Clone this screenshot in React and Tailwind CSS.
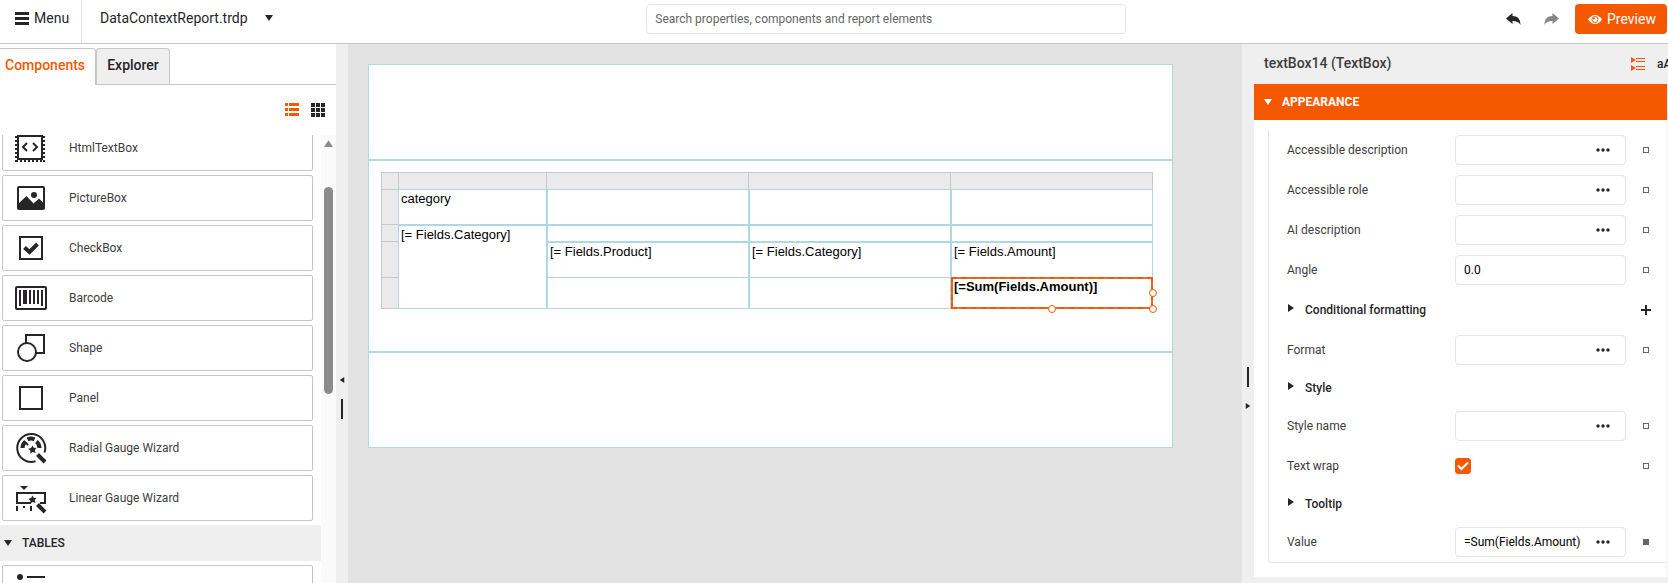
import React, { useState } from 'react';
import clsx from 'clsx';

const DARK = '#272528';
const ORANGE = '#f55900';

const Caret = ({ dir = 'down', className }) => (
  <svg viewBox="0 0 8 8" className={clsx('shrink-0', className)} fill="currentColor" aria-hidden="true">
    {dir === 'down' && <path d="M0 1h8L4 7z" />}
    {dir === 'up' && <path d="M0 7h8L4 1z" />}
    {dir === 'right' && <path d="M1 0v8l6-4z" />}
    {dir === 'left' && <path d="M7 0v8L1 4z" />}
  </svg>
);

const Wand = () => (
  <>
    <path d="M17.5 13.5l1.2 2.3 2.8.1-1.7 2.2.8 2.8-2.8-.8-2.5 1.4.1-2.8-2.1-1.9 2.7-.8z" fill={DARK} />
    <path d="M22.5 22.5l7.5 7.5" stroke={DARK} strokeWidth="4" />
  </>
);

const icons = {
  html: (
    <>
      <path d="M1 0v30M29 0v30M1 29h29" stroke={DARK} strokeWidth="2" strokeDasharray="2 2" />
      <path d="M3 4h24v23H3z" fill="#fff" stroke={DARK} strokeWidth="2" />
      <path d="M12 11l-4 4 4 4M18 11l4 4-4 4" stroke={DARK} strokeWidth="2" />
    </>
  ),
  picture: (
    <>
      <rect x="3" y="5" width="26" height="22" rx="1" stroke={DARK} strokeWidth="2" />
      <circle cx="19" cy="13" r="3" fill={DARK} />
      <path d="M3 27v-5l8.500-8 7 7.500 5.500-5 5 5V27z" fill={DARK} />
    </>
  ),
  check: (
    <>
      <path d="M5 5h22v22H5z" stroke={DARK} strokeWidth="2" />
      <path d="M9.500 15.500l5 4.500 8-8" stroke={DARK} strokeWidth="4" />
    </>
  ),
  barcode: (
    <>
      <rect x="1" y="5" width="30" height="22" rx="1" stroke={DARK} strokeWidth="2" />
      <path
        d="M4 8h2v16H4zM8 8h4v14H8zM14 8h2v14h-2zM18 8h2v14h-2zM22 8h2v14h-2zM26 8h2v16h-2z"
        fill={DARK}
      />
    </>
  ),
  shape: (
    <>
      <path d="M11 3h18v18H11z" stroke={DARK} strokeWidth="2" />
      <circle cx="12" cy="20" r="9" fill="#fff" stroke={DARK} strokeWidth="2" />
    </>
  ),
  panel: <path d="M5 5h22v22H5z" stroke={DARK} strokeWidth="2" />,
  radial: (
    <>
      <path d="M20.500 29.300A14 14 0 1 1 29.500 20.500" stroke={DARK} strokeWidth="2" />
      <path d="M12.500 7.300A9.500 9.500 0 0 1 19.500 7.300" stroke={DARK} strokeWidth="4" />
      <path d="M7.500 16A9 9 0 0 1 10.500 9.500" stroke={DARK} strokeWidth="4" />
      <path d="M21.500 9.500A9 9 0 0 1 24.500 16" stroke={DARK} strokeWidth="4" />
      <path d="M10 10l3 3" stroke={DARK} strokeWidth="2" />
      <Wand />
    </>
  ),
  linear: (
    <>
      <path d="M5 4h8L9 8z" fill={DARK} />
      <path d="M16 21H2V11h28v10h-5" stroke={DARK} strokeWidth="2" />
      <path d="M2 24v5M16 24v5M9 24v2" stroke={DARK} strokeWidth="2" />
      <Wand />
    </>
  ),
  list: (
    <>
      <circle cx="5" cy="5" r="3" fill={DARK} />
      <path d="M12 5h18" stroke={DARK} strokeWidth="2" />
    </>
  ),
};

const components = [
  { icon: 'html', label: 'HtmlTextBox' },
  { icon: 'picture', label: 'PictureBox' },
  { icon: 'check', label: 'CheckBox' },
  { icon: 'barcode', label: 'Barcode' },
  { icon: 'shape', label: 'Shape' },
  { icon: 'panel', label: 'Panel' },
  { icon: 'radial', label: 'Radial Gauge Wizard' },
  { icon: 'linear', label: 'Linear Gauge Wizard' },
];

const properties = [
  { type: 'editor', label: 'Accessible description', value: '', more: true },
  { type: 'editor', label: 'Accessible role', value: '', more: true },
  { type: 'editor', label: 'AI description', value: '', more: true },
  { type: 'editor', label: 'Angle', value: '0.0' },
  { type: 'group', label: 'Conditional formatting', add: true },
  { type: 'editor', label: 'Format', value: '', more: true },
  { type: 'group', label: 'Style' },
  { type: 'editor', label: 'Style name', value: '', more: true },
  { type: 'check', label: 'Text wrap' },
  { type: 'group', label: 'Tooltip' },
  { type: 'editor', label: 'Value', value: '=Sum(Fields.Amount)', more: true, changed: true },
];

const Header = () => (
  <header className="flex h-11 shrink-0 items-start border-b border-[#c6c8c7] bg-white">
    <button className="flex h-full w-[82px] shrink-0 items-start gap-[5px] border-r border-[#e4e4e4] pl-[15px] pt-2 text-sm">
      <svg viewBox="0 0 14 13" className="mt-1 h-[13px] w-[14px]" fill={DARK} aria-hidden="true">
        <path d="M0 0h14v3H0zM0 5h14v3H0zM0 10h14v3H0z" />
      </svg>
      Menu
    </button>
    <button className="flex items-center gap-[17px] pl-[18px] pt-2 text-sm">
      DataContextReport.trdp
      <Caret className="size-2" />
    </button>
    <div className="flex flex-1 justify-center pr-[6px] pt-1">
      <input
        type="text"
        aria-label="Search"
        placeholder="Search properties, components and report elements"
        className="h-[30px] w-[480px] rounded border border-[#e6e6e6] px-2 text-xs placeholder:text-[#666]"
      />
    </div>
    <div className="flex items-center pr-px pt-1">
      <button aria-label="Undo" className="mr-[23px]">
        <svg viewBox="0 0 15 12" className="h-3 w-[15px]" fill={DARK} aria-hidden="true">
          <path d="M0 5.500L6.500 0v3c5 0 8 3 8 9-1.500-3-4-4-8-4v3z" />
        </svg>
      </button>
      <button aria-label="Redo" className="mr-4">
        <svg viewBox="0 0 15 12" className="h-3 w-[15px]" fill="#858585" aria-hidden="true">
          <path d="M15 5.500L8.500 0v3c-5 0-8 3-8 9 1.500-3 4-4 8-4v3z" />
        </svg>
      </button>
      <button className="flex h-[30px] w-[92px] items-center gap-[5px] rounded bg-[#f55900] pl-[13px] text-sm text-white">
        <svg viewBox="0 0 14 9" className="h-[9px] w-[14px]" aria-hidden="true">
          <path d="M0 4.500C2 1.500 4.500 0 7 0s5 1.500 7 4.500C12 7.500 9.500 9 7 9S2 7.500 0 4.500z" fill="#fff" />
          <circle cx="7" cy="4.500" r="3" fill="none" stroke={ORANGE} strokeWidth="1" />
          <circle cx="6" cy="3.500" r="1" fill={ORANGE} />
        </svg>
        Preview
      </button>
    </div>
  </header>
);

const ComponentItem = ({ icon, label }) => (
  <li>
    <button className="flex h-[46px] w-full items-center gap-[22px] rounded-xs border border-[#c6c6c6] bg-white pl-3 text-left text-xs text-[#3d3d3d]">
      <svg viewBox="0 0 32 32" className="size-8 shrink-0" fill="none" aria-hidden="true">
        {icons[icon]}
      </svg>
      {label}
    </button>
  </li>
);

const ComponentsPanel = () => (
  <aside className="flex w-[336px] shrink-0 flex-col bg-white pt-1">
    <div className="flex border-b border-[#c6c6c6] text-sm font-medium">
      <button className="-mb-px h-[37px] w-24 rounded-tr border-r border-t border-[#c6c6c6] bg-white pb-1 pl-[5px] text-left text-[#f55900]">
        Components
      </button>
      <button className="h-9 w-[74px] rounded-t border border-b-0 border-[#c6c6c6] bg-[#efefef] pb-[3px]">
        Explorer
      </button>
    </div>
    <div className="flex h-[50px] shrink-0 items-start justify-end gap-3 pr-[11px] pt-[18px]">
      <button aria-label="List view">
        <svg viewBox="0 0 14 13" className="h-[13px] w-[14px]" fill={ORANGE} aria-hidden="true">
          <path d="M0 0h3v3H0zM4 0h10v3H4zM0 5h3v3H0zM4 5h10v3H4zM0 10h3v3H0zM4 10h10v3H4z" />
        </svg>
      </button>
      <button aria-label="Grid view">
        <svg viewBox="0 0 14 14" className="size-[14px]" fill={DARK} aria-hidden="true">
          <path d="M0 0h4v4H0zM5 0h4v4H5zM10 0h4v4h-4zM0 5h4v4H0zM5 5h4v4H5zM10 5h4v4h-4zM0 10h4v4H0zM5 10h4v4H5zM10 10h4v4h-4z" />
        </svg>
      </button>
    </div>
    <div className="flex min-h-0 flex-1">
      <div className="flex min-w-0 flex-1 flex-col justify-start overflow-hidden">
        {/* the list is scrolled, so the first item is partly out of view */}
        <div className="-mt-[10px]">
          <ul className="flex flex-col gap-1 pl-[2px] pr-2">
            {components.map((item) => (
              <ComponentItem key={item.label} {...item} />
            ))}
          </ul>
          <button className="my-1 flex h-9 w-full items-center gap-[10px] bg-[#efefef] pl-1 text-xs font-medium">
            <Caret className="size-2" />
            TABLES
          </button>
          <ul className="pl-[2px] pr-2">
            <ComponentItem icon="list" label="" />
          </ul>
        </div>
      </div>
      <div className="flex w-[15px] shrink-0 flex-col items-center bg-[#fafafa] pt-1 text-[#8b8b8b]">
        <Caret dir="up" className="size-[9px]" />
        <div className="mt-[39px] h-[207px] w-[9px] rounded-full bg-[#8b8b8b]" />
      </div>
    </div>
  </aside>
);

const Splitter = ({ side }) => (
  <div
    className={clsx(
      'flex w-3 shrink-0 items-center justify-center gap-4 bg-[#efefef]',
      side === 'left' ? 'flex-col pt-[168px]' : 'flex-col-reverse pt-[148px]'
    )}
  >
    <Caret dir={side} className="size-[6px]" />
    <div className="h-5 w-[2px] bg-[#272528]" />
  </div>
);

const cell = 'border border-[#add8e6] px-[2px] pt-px text-left align-top';
const gutter = 'border border-t-0 border-r-0 border-[#c8c8c8] bg-[#eaeaea]';
const handle = 'absolute size-2 rounded-full border border-[#f55900] bg-white';

const ReportTable = () => (
  <table className="w-[772px] table-fixed border-separate border-spacing-0 text-[13px] leading-4 text-black">
    <colgroup>
      <col className="w-[17px]" />
      <col className="w-[149px]" />
      <col className="w-[202px]" />
      <col className="w-[202px]" />
      <col className="w-[202px]" />
    </colgroup>
    <tbody>
      <tr className="h-[17px] bg-[#eaeaea]">
        <td className="border-l border-t border-[#c8c8c8]"></td>
        <td className="border-x border-t border-[#c8c8c8]"></td>
        <td className="border-r border-t border-[#c8c8c8]"></td>
        <td className="border-r border-t border-[#c8c8c8]"></td>
        <td className="border-r border-t border-[#c8c8c8]"></td>
      </tr>
      <tr className="h-9">
        <td className="border border-r-0 border-[#c8c8c8] bg-[#eaeaea]"></td>
        <td className={cell}>category</td>
        <td className={cell}></td>
        <td className={cell}></td>
        <td className={cell}></td>
      </tr>
      <tr className="h-[17px]">
        <td className={gutter}></td>
        <td rowSpan={3} className={cell}>[= Fields.Category]</td>
        <td className={cell}></td>
        <td className={cell}></td>
        <td className={cell}></td>
      </tr>
      <tr className="h-9">
        <td className={gutter}></td>
        <td className={cell}>[= Fields.Product]</td>
        <td className={cell}>[= Fields.Category]</td>
        <td className={cell}>[= Fields.Amount]</td>
      </tr>
      <tr className="h-[31px]">
        <td className={gutter}></td>
        <td className={clsx(cell, 'border-t-0')}></td>
        <td className={clsx(cell, 'border-t-0')}></td>
        <td className={clsx(cell, 'relative border-t-0')}>
          <b>[=Sum(Fields.Amount)]</b>
          <div className="absolute -left-px -right-px -top-px -bottom-px border-2 border-[#e0703a]">
            <div className="absolute -inset-[2px] border-2 border-dashed border-[#f55900]" />
            <span className={clsx(handle, '-right-[6px] top-[10px]')} />
            <span className={clsx(handle, '-bottom-[6px] -right-[6px]')} />
            <span className={clsx(handle, '-bottom-[6px] left-[95px]')} />
          </div>
        </td>
      </tr>
    </tbody>
  </table>
);

const Canvas = () => (
  <main className="min-w-0 flex-1 overflow-hidden bg-[#e3e3e3] pl-5 pt-5 font-['Liberation_Sans',Arial,sans-serif]">
    <div className="w-[805px] border border-[#add8e6] bg-white">
      <section className="h-[94px]" />
      <section className="h-[194px] border-y-2 border-[#add8e6] pl-3 pt-[11px]">
        <ReportTable />
      </section>
      <section className="h-[94px]" />
    </div>
  </main>
);

const Marker = ({ filled }) => (
  <button aria-label="Reset value" className="flex w-10 shrink-0 items-center justify-center">
    <span className={clsx('size-[6px] border border-[#666]', filled && 'bg-[#666]')} />
  </button>
);

const PropertyRow = ({ prop }) => {
  const [value, setValue] = useState(prop.value);
  const [checked, setChecked] = useState(true);
  const id = prop.label.toLowerCase().replace(/ /g, '-');

  if (prop.type === 'group') {
    return (
      <div className={clsx('flex items-center pl-[18px] pr-[15px]', prop.add ? 'h-10' : 'h-9')}>
        <button className="flex flex-1 items-center gap-[10px] text-xs font-medium">
          <Caret dir="right" className="mb-1 size-2" />
          {prop.label}
        </button>
        {prop.add && (
          <button aria-label="Add rule">
            <svg viewBox="0 0 10 10" className="size-[10px]" aria-hidden="true">
              <path d="M5 0v10M0 5h10" stroke={DARK} strokeWidth="2" />
            </svg>
          </button>
        )}
      </div>
    );
  }

  return (
    <div className="flex h-10 items-center pl-[18px]">
      <label htmlFor={id} className="flex-1 text-xs text-[#3d3d3d]">
        {prop.label}
      </label>
      {prop.type === 'check' ? (
        <div className="relative flex w-[171px]">
          <input
            id={id}
            type="checkbox"
            checked={checked}
            onChange={(e) => setChecked(e.target.checked)}
            className="size-4 appearance-none rounded-[3px] border border-[#c6c6c6] checked:border-[#f55900] checked:bg-[#f55900]"
          />
          {checked && (
            <svg viewBox="0 0 16 16" className="pointer-events-none absolute left-0 top-0 size-4" fill="none" aria-hidden="true">
              <path d="M3 7.500l3.500 3.500L13 4.500" stroke="#fff" strokeWidth="2" />
            </svg>
          )}
        </div>
      ) : (
        <div className="flex h-[30px] w-[171px] items-center rounded border border-[#e6e6e6] pr-[15px]">
          <input
            id={id}
            type="text"
            value={value}
            onChange={(e) => setValue(e.target.value)}
            className="min-w-0 flex-1 pl-2 text-xs text-black outline-none"
          />
          {prop.more && (
            <button aria-label={`Edit ${prop.label}`}>
              <svg viewBox="0 0 14 4" className="h-1 w-[14px]" fill={DARK} aria-hidden="true">
                <circle cx="2" cy="2" r="1.700" />
                <circle cx="7" cy="2" r="1.700" />
                <circle cx="12" cy="2" r="1.700" />
              </svg>
            </button>
          )}
        </div>
      )}
      <Marker filled={prop.changed} />
    </div>
  );
};

const PropertiesPanel = () => (
  <aside className="w-[414px] shrink-0 overflow-hidden bg-[#efefef]">
    <div className="flex h-10 items-center pl-[10px]">
      <h2 className="flex-1 pb-[2px] text-sm font-medium text-[#3d3d3d]">textBox14 (TextBox)</h2>
      <button aria-label="Categorized" className="mr-3">
        <svg viewBox="0 0 14 14" className="size-[14px]" aria-hidden="true">
          <path d="M0 0l5 3-5 3zM0 8l5 3-5 3z" fill={ORANGE} />
          <path d="M5 1.500h9M5 4.500h9M5 9.500h9M5 12.500h9" stroke={ORANGE} strokeWidth="1" />
        </svg>
      </button>
      <button className="w-[11px] whitespace-nowrap text-left text-xs font-medium">aA</button>
    </div>
    <div className="mr-px bg-white">
      <button className="flex h-9 w-full items-center gap-[10px] bg-[#f55900] pl-[10px] text-xs font-bold text-white">
        <Caret className="size-2" />
        APPEARANCE
      </button>
      <div className="pb-[14px] pl-[14px] pt-[10px]">
        <div className="rounded-bl border-b border-l border-[#e6e6e6] pr-px">
          {properties.map((prop) => (
            <PropertyRow key={prop.label} prop={prop} />
          ))}
        </div>
      </div>
    </div>
  </aside>
);

const App = () => {
  return (
    <div className="flex h-screen flex-col overflow-hidden bg-white font-['Roboto',sans-serif] text-[#272528]">
      <Header />
      <div className="flex min-h-0 flex-1">
        <ComponentsPanel />
        <Splitter side="left" />
        <Canvas />
        <Splitter side="right" />
        <PropertiesPanel />
      </div>
    </div>
  );
};

export default App;
